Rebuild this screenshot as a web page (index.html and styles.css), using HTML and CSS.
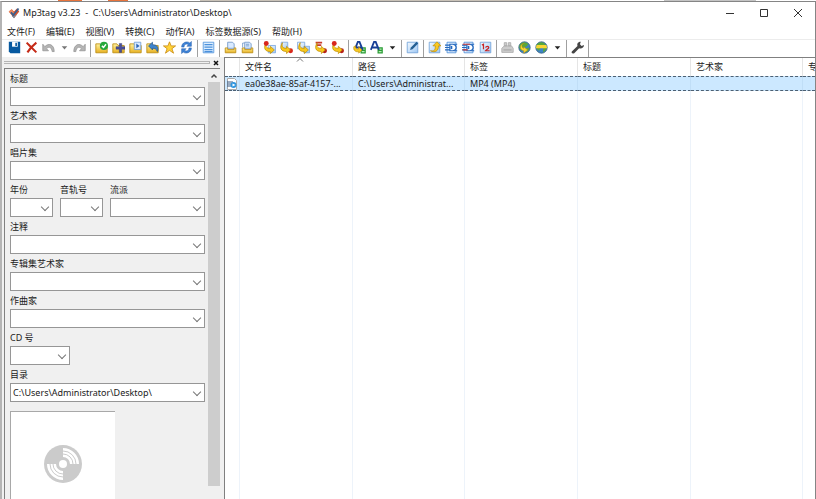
FILE: index.html
```html
<!DOCTYPE html>
<html lang="zh-CN">
<head>
<meta charset="utf-8">
<meta name="viewport" content="width=device-width, initial-scale=1">
<title>Mp3tag v3.23</title>
<link rel="stylesheet" href="styles.css">
</head>
<body>
<svg class="defs" width="0" height="0" aria-hidden="true">
  <defs>
    <linearGradient id="gold" x1="0" y1="0" x2="0" y2="1"><stop offset="0" stop-color="#fff3a0"/><stop offset="1" stop-color="#e8b020"/></linearGradient>
    <linearGradient id="sky" x1="0" y1="0" x2="1" y2="1"><stop offset="0" stop-color="#f4faff"/><stop offset="1" stop-color="#9fc8f4"/></linearGradient>
    <symbol id="folder" viewBox="0 0 16 16"><path d="M1 14.500V3.500h5l1.500 2H15v9z" fill="url(#gold)" stroke="#b98a10"/></symbol>
    <symbol id="sheet" viewBox="0 0 16 16"><path d="M1.500 1.500h13v13h-13z" fill="url(#sky)" stroke="#6d9fd8"/></symbol>
    <symbol id="hook" viewBox="0 0 16 16"><path d="M4 2c-1 5 0 7 5 7V6.500l5 4.500-5 4.500V13C2 13 0 8 4 2z" fill="#f8c81c" stroke="#b88600" stroke-width=".8"/></symbol>
    <symbol id="chip" viewBox="0 0 16 16"><path d="M2.500 1.500h11v13h-11z" fill="#e4f1ff" stroke="#4a8cd8"/><path d="M0 5h6M0 8h6M0 11h6M11 4h4M11 12h4" stroke="#2468bd" stroke-width="1.500"/><path d="M6 4h4c5 1 5 7 0 8H6z" fill="#fff" stroke="#2468bd" stroke-width="1.500"/><path d="M8 6v4" stroke="#2468bd" stroke-width="2"/></symbol>
    <symbol id="globe" viewBox="0 0 16 16"><circle cx="8" cy="8" r="7" fill="#3d83c8" stroke="#36617e"/><path d="M2 5c3-5 8-4 11-1l-3 3-3 1-2 4C2 11 1 8 2 5zM10 9l4-1c0 3-2 5-4 6z" fill="#59a83b"/></symbol>
    <symbol id="undo" viewBox="0 0 16 16"><path d="M1 4v8h7L5.500 9.500C9 6 12 8 12.500 13H15C15 4 8 2 3.500 7z" fill="#b5b5b5" stroke="#969696"/></symbol>
    <symbol id="printer" viewBox="0 0 16 16"><path d="M4.500 1.500h6l2 2V9h-8z" fill="#d9eaff" stroke="#6d94c5"/><path d="M1.500 8.500h3v2h8v-2h2v6h-13z" fill="url(#gold)" stroke="#b98a10"/></symbol>
  </defs>
</svg>

<div class="backdrop"></div>
<main class="window">
  <header class="titlebar">
    <svg class="logo" viewBox="0 0 16 16" aria-hidden="true"><path d="M1 6l4-3 3 3 4-4 3 4-7 9z" fill="#d9542b"/><path d="M1 6l4-3 3 4-3 4z" fill="#e98a62"/><path d="M4 7l3 4 7-9" fill="none" stroke="#3b618f" stroke-width="2.500"/><path d="M5 12l3 3 4-5-4 2z" fill="#7c8998"/></svg>
    <h1 class="title">Mp3tag v3.23 &nbsp;- &nbsp;C:\Users\Administrator\Desktop\</h1>
    <div class="controls">
      <button aria-label="最小化"><svg viewBox="0 0 10 10"><path d="M1 5.500h8"/></svg></button>
      <button aria-label="最大化"><svg viewBox="0 0 10 10"><path d="M1.500 1.500h7v7h-7z"/></svg></button>
      <button aria-label="关闭"><svg viewBox="0 0 10 10"><path d="M1 1l8 8M9 1L1 9"/></svg></button>
    </div>
  </header>

  <nav class="menu">
    <button>文件(F)</button><button>编辑(E)</button><button>视图(V)</button><button>转换(C)</button><button>动作(A)</button><button>标签数据源(S)</button><button>帮助(H)</button>
  </nav>

  <div class="toolbar" role="toolbar" aria-label="工具栏">
    <div class="group">
      <button aria-label="保存标签"><svg viewBox="0 0 16 16"><path d="M1 1h14v14H3l-2-2z" fill="#0759a0"/><path d="M5 1h7v6H5z" fill="#fff"/><path d="M9 2h2v4H9z" fill="#0759a0"/></svg></button>
      <button aria-label="移除标签"><svg viewBox="0 0 16 16"><path d="M2 2c4 4 7 7 12 12M14 2C9 6 6 9 3 14" fill="none" stroke="#c52a17" stroke-width="2.500"/></svg></button>
      <button aria-label="撤消"><svg viewBox="0 0 16 16"><use href="#undo"/></svg></button>
      <button class="drop" aria-label="撤消列表"><svg viewBox="0 0 16 16"><path d="M4 6h8l-4 5z" fill="#777"/></svg></button>
      <button aria-label="重做"><svg viewBox="0 0 16 16"><use href="#undo" transform="translate(16 0) scale(-1 1)"/></svg></button>
    </div>
    <div class="group">
      <button aria-label="更改目录"><svg viewBox="0 0 16 16"><use href="#folder"/><circle cx="11" cy="6" r="5" fill="#27a83b"/><path d="M8.500 6l2 2 3-4" fill="none" stroke="#fff" stroke-width="1.800"/></svg></button>
      <button aria-label="添加目录"><svg viewBox="0 0 16 16"><use href="#folder"/><path d="M9 3h3v4h4v3h-4v4H9v-4H5V7h4z" fill="#4a4f9b" stroke="#30346e" stroke-width=".5"/></svg></button>
      <button aria-label="载入播放列表"><svg viewBox="0 0 16 16"><use href="#folder"/><path d="M6.500 1.500h8v9h-8z" fill="#d9eaff" stroke="#6b9bd5"/><path d="M9 3l4 3-4 3z" fill="#2d66b5"/></svg></button>
      <button aria-label="上级目录"><svg viewBox="0 0 16 16"><use href="#folder"/><path d="M3 6l5-4.500V4.500c6 0 8 4 6 8.500-1-3-3-4-6-4v2z" fill="#3d84ce" stroke="#1c4d83" stroke-width=".8"/></svg></button>
      <button aria-label="收藏目录"><svg viewBox="0 0 16 16"><path d="M8 1l2 5h5.500l-4.500 3.500 2 5.500-5-3.500L3 15l2-5.500L.5 6H6z" fill="#ffd33b" stroke="#c98a10"/></svg></button>
      <button aria-label="刷新"><svg viewBox="0 0 16 16"><path d="M2 7.500c0-6 7-8 10-5l2-2v6H8.500l2-2C8 3 5 4 5 7.500zM14 8.500c0 6-7 8-10 5l-2 2v-6h5.500l-2 2c2.500 1.500 5.500.5 5.500-3z" fill="#3e83d6" stroke="#1c58a7" stroke-width=".6"/></svg></button>
    </div>
    <div class="group">
      <button aria-label="全选"><svg viewBox="0 0 16 16"><path d="M1.500 1.500h13v13h-13z" fill="#dceeff" stroke="#4c91db"/><path d="M3 4.500h10M3 7.500h10M3 10.500h10M3 13h10" stroke="#4c91db" stroke-width="1.500"/></svg></button>
    </div>
    <div class="group">
      <button aria-label="导出"><svg viewBox="0 0 16 16"><use href="#printer"/></svg></button>
      <button aria-label="导出全部"><svg viewBox="0 0 16 16"><use href="#printer"/><path d="M2 8V2.500h2M6 4h4M6 6h4" fill="none" stroke="#6d94c5"/></svg></button>
    </div>
    <div class="group">
      <button aria-label="标签到文件名"><svg viewBox="0 0 16 16"><path d="M6.500 5.500h9v9h-9z" fill="url(#sky)" stroke="#77a5df"/><use href="#hook"/><circle cx="4" cy="3" r="3" fill="#d8261d"/></svg></button>
      <button aria-label="文件名到标签"><svg viewBox="0 0 16 16"><path d="M1.500 1.500h8v8h-8z" fill="url(#sky)" stroke="#77a5df"/><circle cx="13" cy="12" r="3" fill="#d8261d"/><use href="#hook" transform="translate(-1 0)"/></svg></button>
      <button aria-label="文件名到文件名"><svg viewBox="0 0 16 16"><path d="M.5 1.500h9v8h-9zM8.500 6.500h7v8h-7z" fill="url(#sky)" stroke="#77a5df"/><use href="#hook"/></svg></button>
      <button aria-label="文本文件到标签"><svg viewBox="0 0 16 16"><path d="M2 2h8M3 5h6" stroke="#c93b2c" stroke-width="2"/><circle cx="13" cy="12" r="3" fill="#b51d18"/><use href="#hook"/></svg></button>
      <button aria-label="标签到标签"><svg viewBox="0 0 16 16"><circle cx="13" cy="12" r="3" fill="#b51d18"/><use href="#hook"/><circle cx="4" cy="3" r="3" fill="#d8261d"/></svg></button>
    </div>
    <div class="group">
      <button aria-label="动作"><svg viewBox="0 0 16 16"><path d="M10 8.500h5v6h-5zM10 11.500h5" fill="#b7efb6" stroke="#299b34" stroke-width="1.500"/><path d="M2 11L6 1h2l4 10M4 8h6" fill="none" stroke="#173e96" stroke-width="2.200"/><path d="M1 7c-1 5 3 7 6 6v2l4-4-4-4v3c-3 0-4-1-4-4z" fill="#f8ca22" stroke="#b88600" stroke-width=".7"/></svg></button>
      <button aria-label="快速动作"><svg viewBox="0 0 16 16"><path d="M10 8.500h5v6h-5zM10 11.500h5" fill="#b7efb6" stroke="#299b34" stroke-width="1.500"/><path d="M1 11L5 1h2l4 10M3 8h6" fill="none" stroke="#173e96" stroke-width="2.200"/></svg></button>
      <button class="drop" aria-label="动作列表"><svg viewBox="0 0 16 16"><path d="M4 6h8l-4 5z" fill="#222"/></svg></button>
    </div>
    <div class="group">
      <button aria-label="扩展标签"><svg viewBox="0 0 16 16"><use href="#sheet"/><path d="M5 11l1-3 7-7 2 2-7 7z" fill="#255f93"/></svg></button>
    </div>
    <div class="group">
      <button aria-label="重命名"><svg viewBox="0 0 16 16"><use href="#sheet"/><path d="M3 12c5 1 6-1 6-6H6l5-5 5 5h-3c0 6-4 9-10 6z" fill="#f8c822" stroke="#b88600" stroke-width=".8"/></svg></button>
      <button aria-label="大小写转换"><svg viewBox="0 0 16 16"><use href="#chip"/></svg></button>
      <button aria-label="移除字段"><svg viewBox="0 0 16 16"><use href="#chip"/><path d="M1 4h9M1 11h6" stroke="#d43b34" stroke-width="1.500"/></svg></button>
      <button aria-label="音轨号向导"><svg viewBox="0 0 16 16"><use href="#sheet"/><path d="M3.500 5l2-1v6M8 8c1-2 4-2 4 0 0 2-3 2-4 4h5" fill="none" stroke="#c92525" stroke-width="1.500"/></svg></button>
    </div>
    <div class="group">
      <button aria-label="光盘数据"><svg viewBox="0 0 16 16"><path d="M1 9l3-3h9l2 3v5H1zM4 2h3v4H4zM9 2h3v4H9z" fill="#ccc" stroke="#aaa"/><path d="M3 11h10" stroke="#999"/></svg></button>
      <button aria-label="网络标签源"><svg viewBox="0 0 16 16"><use href="#globe"/><path d="M8 3C4 3 4 8 7 9v-2l5 4-5 4v-3C1 11 2 3 8 3z" fill="#f8d534" stroke="#b28b10" stroke-width=".6"/></svg></button>
      <button aria-label="网络搜索"><svg viewBox="0 0 16 16"><use href="#globe"/><path d="M2 5h12l1 4H1z" fill="#f8d534"/></svg></button>
      <button class="drop" aria-label="标签源列表"><svg viewBox="0 0 16 16"><path d="M4 6h8l-4 5z" fill="#222"/></svg></button>
    </div>
    <div class="group">
      <button aria-label="选项"><svg viewBox="0 0 16 16"><path d="M1 13l7-7c-1-3 1-5 4-5l-1 3 2 2 3-1c0 3-3 5-6 4l-6 6c-2 1-4 0-3-2z" fill="#454545"/></svg></button>
    </div>
  </div>

  <div class="workspace">
    <aside class="panel">
      <div class="panel-head"><span class="grip"></span><button aria-label="关闭面板"><svg viewBox="0 0 8 8"><path d="M2 2l4 4M6 2L2 6"/></svg></button></div>
      <div class="panel-body">
        <form class="fields">
          <div class="field"><label for="f-title">标题</label><span class="combo"><select id="f-title"></select></span></div>
          <div class="field"><label for="f-artist">艺术家</label><span class="combo"><select id="f-artist"></select></span></div>
          <div class="field"><label for="f-album">唱片集</label><span class="combo"><select id="f-album"></select></span></div>
          <div class="trio">
            <div class="field"><label for="f-year">年份</label><span class="combo"><select id="f-year"></select></span></div>
            <div class="field"><label for="f-track">音轨号</label><span class="combo"><select id="f-track"></select></span></div>
            <div class="field"><label for="f-genre">流派</label><span class="combo"><select id="f-genre"></select></span></div>
          </div>
          <div class="field"><label for="f-comment">注释</label><span class="combo"><select id="f-comment"></select></span></div>
          <div class="field"><label for="f-albumartist">专辑集艺术家</label><span class="combo"><select id="f-albumartist"></select></span></div>
          <div class="field"><label for="f-composer">作曲家</label><span class="combo"><select id="f-composer"></select></span></div>
          <div class="field short"><label for="f-disc">CD 号</label><span class="combo"><select id="f-disc"></select></span></div>
          <div class="field"><label for="f-dir">目录</label><span class="combo"><select id="f-dir"><option>C:\Users\Administrator\Desktop\</option></select></span></div>
          <div class="cover">
            <svg viewBox="0 0 40 40" aria-hidden="true"><circle cx="20" cy="20" r="19" fill="#cbcbcb"/><path d="M20 4a16 16 0 0 1 16 16h-9a7 7 0 0 0-7-7zM20 36A16 16 0 0 1 4 20h9a7 7 0 0 0 7 7z" fill="#fff"/><path d="M20 7a13 13 0 0 1 13 13M20 10a10 10 0 0 1 10 10M20 33A13 13 0 0 1 7 20M20 30a10 10 0 0 1-10-10" fill="none" stroke="#cbcbcb"/><circle cx="20" cy="20" r="4" fill="#fff"/></svg>
          </div>
        </form>
        <div class="scroll"><span class="scroll-up"><svg viewBox="0 0 8 8"><path d="M1.500 5.500L4 3l2.500 2.500"/></svg></span><span class="thumb"></span></div>
      </div>
    </aside>

    <section class="files">
      <table>
        <colgroup><col class="c-icon"><col class="c-wide"><col class="c-mid"><col class="c-wide"><col class="c-wide"><col class="c-mid"><col></colgroup>
        <thead><tr><th></th><th class="sorted">文件名<svg viewBox="0 0 8 4" aria-hidden="true"><path d="M1 3.500L4 .5l3 3"/></svg></th><th>路径</th><th>标签</th><th>标题</th><th>艺术家</th><th>专</th></tr></thead>
        <tbody>
          <tr class="selected"><td><svg class="file" viewBox="0 0 12 12" aria-hidden="true"><path d="M1.500.5h7l2 2v9h-9z" fill="#fff" stroke="#aaa"/><path d="M1 4h6M1 6h6M1 8h5" stroke="#385b84"/><circle cx="7.500" cy="7" r="3" fill="#2d95df"/><path d="M6.500 5.500l3 1.500-3 1.500z" fill="#fff"/></svg></td><td>ea0e38ae-85af-4157-...</td><td>C:\Users\Administrat...</td><td>MP4 (MP4)</td><td></td><td></td><td></td></tr>
          <tr class="rest"><td></td><td></td><td></td><td></td><td></td><td></td><td></td></tr>
        </tbody>
      </table>
    </section>
  </div>
</main>
</body>
</html>
```
FILE: styles.css
```css
* { box-sizing: border-box; }

body {
  margin: 0;
  height: 100vh;
  display: flex;
  flex-direction: column;
  overflow: hidden;
  background: #fff;
  color: #1a1a1a;
  font: 9px/12px "Noto Sans", "Noto Sans CJK SC", sans-serif;
}

button, select {
  margin: 0;
  padding: 0;
  border: 0;
  border-radius: 0;
  background: none;
  color: inherit;
  font: inherit;
}

svg { display: block; }
.defs { position: absolute; }

.backdrop {
  flex: none;
  height: 1px;
  background: linear-gradient(90deg, #fff 58px, #e8743c 58px 82px, #fff 82px 108px, #e8743c 108px 128px, #fff 128px 200px, #c9c2b8 200px 530px, #fff 530px 664px, #c4c4c4 664px 756px, #fff 756px);
}

.window {
  flex: 1;
  min-height: 0;
  display: flex;
  flex-direction: column;
  border: solid #858585;
  border-width: 1px 1px 0 2px;
  border-left-color: #b4b4b4;
}

/* Title bar and menu */
.titlebar {
  flex: none;
  height: 22px;
  display: flex;
  align-items: center;
  padding-left: 6px;
}
.logo { width: 12px; height: 12px; }
.title { flex: 1; margin: 0 0 0 3px; font-size: 9px; font-weight: 400; color: #222; }
.controls { display: flex; }
.controls button { width: 34px; height: 22px; display: grid; place-items: center; }
.controls svg { width: 10px; height: 10px; fill: none; stroke: #333; }

.menu {
  flex: none;
  height: 15px;
  display: flex;
  gap: 11px;
  padding-left: 5px;
}

/* Toolbar */
.toolbar {
  flex: none;
  height: 18px;
  display: flex;
  padding-left: 4px;
  border-top: 1px solid #ececec;
}
.group {
  display: flex;
  align-items: flex-start;
  margin-right: 2px;
  padding-right: 2px;
  border-right: 1px solid #a0a0a0;
}
.group button { width: 17px; height: 15px; display: grid; place-items: center; }
.group .drop { width: 14px; }
.group svg { width: 13px; height: 13px; }
.group .drop svg { width: 11px; height: 11px; }

/* Tag panel */
.workspace { flex: 1; min-height: 0; display: flex; }
.panel {
  flex: none;
  width: 222px;
  display: flex;
  flex-direction: column;
  padding: 0 4px 0 2px;
  background: #f0f0f0;
}
.panel-head { flex: none; height: 11px; display: flex; align-items: center; gap: 2px; }
.grip { flex: 1; height: 3px; border: solid #b4b4b4; border-width: 1px 1px 1px 0; }
.panel-head button { width: 8px; height: 8px; }
.panel-head svg { fill: none; stroke: #111; stroke-width: 1.500; }
.panel-body {
  flex: 1;
  min-height: 0;
  display: flex;
  border: solid #808080;
  border-width: 1px 0 0 1px;
}
.fields {
  flex: 1;
  display: flex;
  flex-direction: column;
  gap: 2px;
  padding: 2px 3px 0 5px;
  overflow: hidden;
}
.field { flex: none; display: flex; flex-direction: column; }
.field label { height: 16px; line-height: 16px; }
.combo { position: relative; display: block; }
.combo select {
  display: block;
  width: 100%;
  height: 19px;
  padding: 0 16px 0 2px;
  appearance: none;
  background: #fff;
  border: 1px solid #969696;
}
.combo::after {
  content: "";
  position: absolute;
  right: 5px;
  top: 6px;
  width: 5px;
  height: 5px;
  border: solid #777;
  border-width: 0 1px 1px 0;
  transform: rotate(45deg);
  pointer-events: none;
}
.trio { flex: none; display: grid; grid-template-columns: 43px 43px 1fr; gap: 7px; }
.short { width: 60px; }
.cover {
  flex: none;
  width: 105px;
  height: 105px;
  margin-top: 7px;
  display: grid;
  place-items: center;
  background: #fff;
  border: solid #a8a8a8;
  border-width: 1px 0 0 1px;
}
.cover svg { width: 40px; height: 40px; }

.scroll { flex: none; width: 12px; display: flex; flex-direction: column; }
.scroll-up { height: 13px; display: grid; place-items: center; }
.scroll-up svg { width: 8px; height: 8px; fill: none; stroke: #444; stroke-width: 1.500; }
.thumb { height: 94%; flex: none; background: #cdcdcd; }

/* File list */
.files {
  flex: 1;
  min-width: 0;
  overflow: hidden;
  border: solid #808080;
  border-width: 1px 0 0 1px;
}
.files table { width: 100%; height: 100%; table-layout: fixed; border-collapse: separate; border-spacing: 0; }
.c-icon { width: 15px; }
.c-wide { width: 113px; }
.c-mid { width: 112px; }
.files th, .files td {
  padding: 0 5px;
  text-align: left;
  font-weight: 400;
  white-space: nowrap;
  overflow: hidden;
  border-right: 1px solid #edf3fa;
}
.files th { height: 18px; border-right-color: #e5e5e5; }
.files th:last-child, .files td:last-child { border-right: 0; }
.sorted { position: relative; }
.sorted svg { position: absolute; top: 0; left: 50%; width: 8px; height: 4px; fill: none; stroke: #777; }
.files .selected td {
  height: 15px;
  background: #cce8ff;
  border-top: 1px dashed #4c6073;
  border-bottom: 1px dashed #4c6073;
  border-right-color: #c0def7;
}
.files td:first-child, .files th:first-child { padding: 0 1px; }
.file { width: 12px; height: 12px; }
```
